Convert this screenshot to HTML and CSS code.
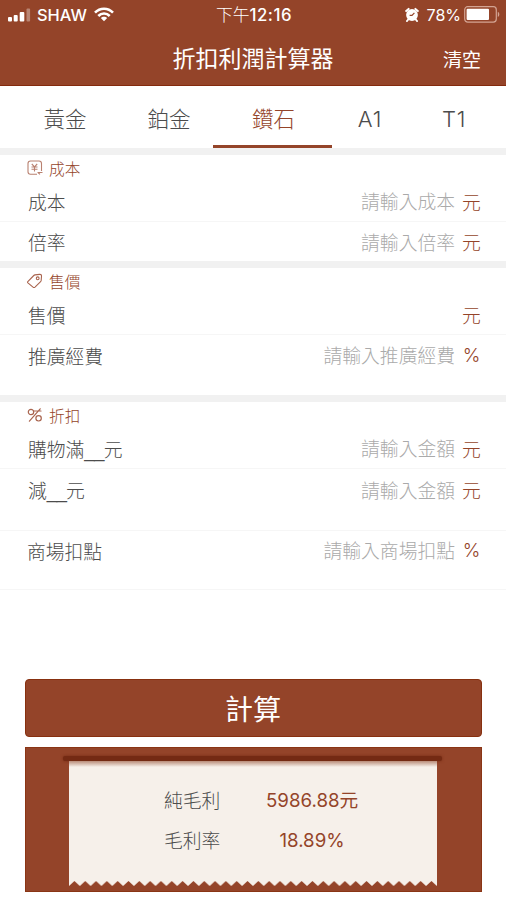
FILE: index.html
```html
<!DOCTYPE html>
<html lang="zh-Hant">
<head>
    <meta charset="UTF-8">
    <meta name="viewport" content="width=device-width, initial-scale=1.0">
    <title>折扣利潤計算器</title>
    <link rel="stylesheet" href="styles.css">
</head>

<body>
    <header>
        <div class="status">
            <div class="status-left">
                <svg class="signal" width="24" height="14" viewBox="0 0 24 14" fill="#fff">
                    <rect x="0" y="9" width="4" height="4.5" rx="1"/>
                    <rect x="5.7" y="7" width="4" height="6.5" rx="1"/>
                    <rect x="11.7" y="4" width="4.6" height="9.5" rx="1"/>
                    <rect x="18.5" y="0.5" width="3.6" height="13" rx="1" opacity="0.35"/>
                </svg>
                <span class="carrier">SHAW</span>
                <svg class="wifi" width="20" height="15" viewBox="0 0 20 15" fill="none" stroke="#fff" stroke-width="2.6">
                    <path d="M1 5.6C6 0.4 14 0.4 19 5.6"/>
                    <path d="M4.3 9C7.5 5.7 12.5 5.7 15.7 9"/>
                    <path d="M10 14.2L6.8 11C8.5 9.3 11.5 9.3 13.2 11Z" fill="#fff" stroke="none"/>
                </svg>
            </div>
            <span class="time">下午<b>12:16</b></span>
            <div class="status-right">
                <svg width="14" height="15" viewBox="0 0 14 15">
                    <circle cx="7" cy="8" r="5.9" fill="#fff"/>
                    <path d="M1.2 4L3.6 1.9M12.8 4L10.4 1.9M3.2 12.5L2 14M10.8 12.5L12 14" stroke="#fff" stroke-width="2" stroke-linecap="round"/>
                    <path d="M9.4 5.8L7 8.3H4.6" fill="none" stroke="#944429" stroke-width="1.2"/>
                </svg>
                <span class="percent">78%</span>
                <svg width="36" height="17" viewBox="0 0 36 17">
                    <rect x="0.7" y="0.7" width="31.6" height="15.4" rx="3" fill="none" stroke="#d3a493" stroke-width="1.2"/>
                    <rect x="2.6" y="2.7" width="22.4" height="11.4" rx="1" fill="#fff"/>
                    <path d="M33.8 5.8C35.8 6.6 35.8 10.2 33.8 11Z" fill="#d3a493"/>
                </svg>
            </div>
        </div>
        <div class="titlebar">
            <h1>折扣利潤計算器</h1>
            <a class="clear">清空</a>
        </div>
    </header>

    <nav>
        <a>黃金</a>
        <a>鉑金</a>
        <a class="active">鑽石</a>
        <a>A1</a>
        <a>T1</a>
    </nav>

    <form id="frmCalc">
        <section>
            <h2>
                <svg width="16" height="16" viewBox="0 0 16 16" fill="none" stroke="#b98170" stroke-width="1.1">
                    <path d="M10 14.3H3.5Q1 14.3 1 11.8V3.5Q1 1 3.5 1H12Q14.5 1 14.5 3.5V11"/>
                    <path d="M4.8 4L7.5 6.8L10.2 4M4.5 7H10.5M4.5 9.3H10.5M7.5 6.8V11.5M10.5 12.5H15.5M11 12.5L13 14.3"/>
                </svg>
                成本
            </h2>
            <div class="row line">
                <label>成本</label>
                <input type="text" placeholder="請輸入成本"/>
                <span class="unit">元</span>
            </div>
            <div class="row">
                <label>倍率</label>
                <input type="text" placeholder="請輸入倍率"/>
                <span class="unit">元</span>
            </div>
        </section>

        <section>
            <h2>
                <svg width="16" height="16" viewBox="0 0 16 16" fill="none" stroke="#a9644e" stroke-width="1.1" stroke-linejoin="round">
                    <path d="M0.8 8.6L6.8 2.5Q7.3 2 8 1.9L12.6 1.4Q14.6 1.2 14.5 3.2L14.2 7.4Q14.1 8.1 13.6 8.6L8 14.1Q7 15 6 14.1L0.9 9.8Q0.3 9.2 0.8 8.6Z"/>
                    <circle cx="10.7" cy="5.3" r="1.4"/>
                </svg>
                售價
            </h2>
            <div class="row line">
                <label>售價</label>
                <input type="text"/>
                <span class="unit">元</span>
            </div>
            <div class="row promo">
                <label>推廣經費</label>
                <input type="text" placeholder="請輸入推廣經費"/>
                <span class="unit">%</span>
            </div>
        </section>

        <section class="last">
            <h2>
                <svg width="16" height="16" viewBox="0 0 16 16" fill="none" stroke="#a9644e" stroke-width="1.2" stroke-linecap="round">
                    <circle cx="4" cy="5" r="2.7"/>
                    <circle cx="11.6" cy="11.3" r="2.7"/>
                    <path d="M13.2 1.8L2.4 14.2M6.5 4H14"/>
                </svg>
                折扣
            </h2>
            <div class="row line">
                <label>購物滿<span class="blank">__</span>元</label>
                <input type="text" placeholder="請輸入金額"/>
                <span class="unit">元</span>
            </div>
            <div class="row line minus">
                <label>減<span class="blank">__</span>元</label>
                <input type="text" placeholder="請輸入金額"/>
                <span class="unit">元</span>
            </div>
            <div class="row line mall">
                <label>商場扣點</label>
                <input type="text" placeholder="請輸入商場扣點"/>
                <span class="unit">%</span>
            </div>
        </section>

        <button id="btnCalc" type="button">計算</button>
    </form>

    <div class="result">
        <div class="slot"></div>
        <div class="paper">
            <dl>
                <dt>純毛利</dt>
                <dd>5986.88元</dd>
                <dt>毛利率</dt>
                <dd>18.89%</dd>
            </dl>
        </div>
        <!-- torn edge of the receipt -->
        <svg class="teeth" width="368" height="5">
            <defs>
                <pattern id="tooth" width="10.82" height="5" patternUnits="userSpaceOnUse">
                    <path d="M0 0H10.82V5L5.41 0L0 5Z" fill="#f6f0ea"/>
                </pattern>
            </defs>
            <rect width="368" height="5" fill="url(#tooth)"/>
        </svg>
    </div>
</body>
</html>
```
FILE: styles.css
```css
* {
    box-sizing: border-box;
}
body {
    margin: 0;
    background-color: #fff;
    color: #4c4c4c;
    font-family: "Liberation Sans", "Noto Sans CJK TC", sans-serif;
    font-weight: 300;
}
header {
    height: 86px;
    background-color: #944429;
    border-bottom: 1px solid #842a0d;
    color: #fff;
}
.status {
    display: grid;
    grid-template-columns: 1fr auto 1fr;
    align-items: center;
    height: 29px;
    padding: 0 6px 0 8px;
    font: 500 16px Inter, "Noto Sans CJK TC", sans-serif;
}
.status-left, .status-right {
    display: flex;
    align-items: center;
}
.status-right {
    justify-content: flex-end;
}
.carrier {
    margin: 0 7px 0 5px;
    font-size: 16.4px;
}
.time {
    padding-top: 1px;
    font-size: 16.8px;
    font-weight: 300;
    line-height: 28px;
}
.time b {
    font-weight: 500;
    letter-spacing: 0.5px;
}
.percent {
    margin: 0 3px 0 8px;
    font-weight: 400;
}
.titlebar {
    display: grid;
    grid-template-columns: 1fr auto 1fr;
    align-items: center;
    height: 58px;
    padding: 0 25px;
}
h1 {
    grid-column: 2;
    margin: 0;
    padding-bottom: 2px;
    font-size: 23px;
    font-weight: 400;
}
.clear {
    justify-self: end;
    padding-top: 1px;
    font-size: 19px;
    font-weight: 400;
}
nav {
    display: flex;
    height: 62px;
    padding-left: 13px;
}
nav a {
    width: 104px;
    font: 300 21.5px/67px Roboto, "Noto Sans CJK TC", sans-serif;
    text-align: center;
}
nav a:nth-child(3) {
    width: 119px;
    margin-right: -4px;
    margin-left: -8px;
    padding-left: 2px;
}
nav a:nth-child(4), nav a:nth-child(5) {
    width: 84px;
    font-family: Inter, sans-serif;
    font-size: 22px;
    letter-spacing: 0.8px;
}
nav a.active {
    border-bottom: 3px solid #944429;
    color: #944429;
}
section {
    border-top: 7px solid #f1f1f1;
}
h2 {
    display: flex;
    align-items: center;
    gap: 6px;
    height: 26px;
    margin: 0;
    padding-left: 27px;
    color: #944429;
    font-size: 15.7px;
    font-weight: 300;
}
.row {
    display: flex;
    align-items: center;
    height: 39px;
    padding: 0 26px 0 28px;
    font-size: 18.8px;
}
.line {
    height: 41px;
    border-bottom: 1px solid #f6f6f6;
}
.promo {
    height: 60px;
    padding-bottom: 20px;
}
.minus {
    height: 62px;
    padding-bottom: 20px;
}
.mall {
    height: 59px;
    padding-left: 27px;
    padding-bottom: 20px;
}
.blank {
    letter-spacing: -0.8px;
}
.row input {
    flex: 1;
    min-width: 0;
    height: 30px;
    padding: 4px 0 0;
    border: 0;
    background: none;
    font: inherit;
    text-align: right;
}
.row input::placeholder {
    color: #aaa;
}
.unit {
    width: 19px;
    margin: 0 -1px 0 7px;
    color: #944429;
    font-family: Inter, "Noto Sans CJK TC", sans-serif;
    text-align: center;
}
#btnCalc {
    display: block;
    width: 457px;
    height: 58px;
    margin: 89px 0 10px 25px;
    padding: 0 1px 0 0;
    border: 1px solid #87300f;
    border-radius: 4px;
    background-color: #944429;
    color: #fff;
    font: 400 28px "Noto Sans CJK TC", sans-serif;
}
.result {
    width: 457px;
    height: 145px;
    margin-left: 25px;
    padding-top: 8px;
    border: 1px solid #8a3515;
    background-color: #944429;
}
.slot {
    height: 5px;
    margin: 0 39px 0 37px;
    border-radius: 2px;
    background-color: #742a13;
    box-shadow: 0 0 3px #742a13;
}
.paper {
    width: 368px;
    height: 120px;
    margin-left: 43px;
    padding-top: 20px;
    background: linear-gradient(#b98c79, #f6f0ea 6px);
}
dl {
    display: grid;
    grid-template-columns: 57px 92px;
    column-gap: 45px;
    margin: 0 0 0 95px;
}
dt {
    padding-top: 2px;
    font-size: 18.8px;
    line-height: 38px;
}
dd {
    margin: 0;
    padding-top: 1px;
    color: #944429;
    font: 400 18.7px/38px Inter, "Noto Sans CJK TC", sans-serif;
    text-align: center;
    white-space: nowrap;
}
.teeth {
    display: block;
    margin-left: 43px;
}
```
